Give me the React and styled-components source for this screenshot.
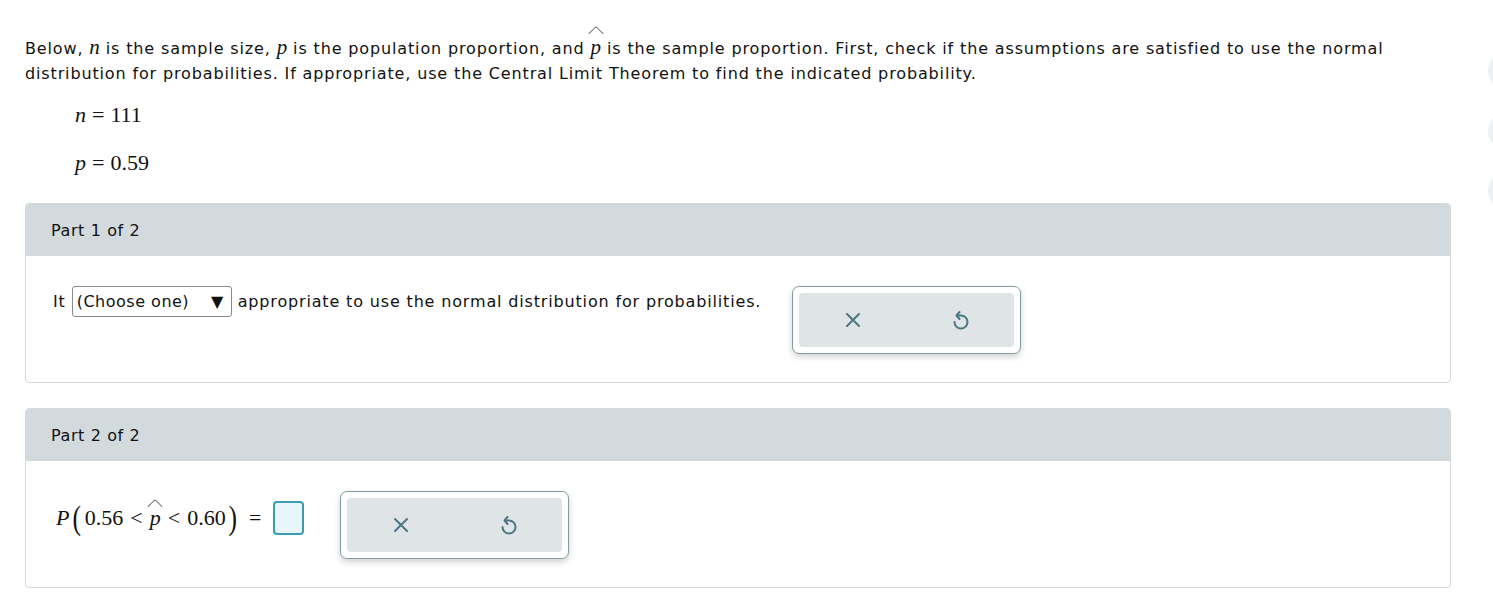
import React from "react";
import styled, { createGlobalStyle } from "styled-components";

const GlobalStyle = createGlobalStyle`
  body {
    margin: 0;
    background: #ffffff;
    font-family: "DejaVu Sans", Verdana, sans-serif;
    color: #111;
  }
`;

const Page = styled.div`
  position: relative;
  width: 1493px;
  height: 602px;
  overflow: hidden;
  padding: 36px 0 0 25px;
  box-sizing: border-box;
`;

const Intro = styled.p`
  margin: 0;
  width: 1400px;
  font-size: 16px;
  line-height: 25px;
  letter-spacing: 0.86px;
`;

const MathVar = styled.span`
  font-family: "Liberation Serif", "Times New Roman", serif;
  font-style: italic;
  font-size: ${(p) => p.size || 22}px;
  line-height: 1;
  letter-spacing: 0;
`;

const Hat = styled.span`
  position: relative;
  display: inline-block;
  line-height: 1;
  &::before {
    content: "";
    position: absolute;
    left: 50%;
    top: ${(p) => p.top}px;
    width: 10px;
    height: 10px;
    border-left: 1.4px solid #444;
    border-top: 1.4px solid #444;
    transform: translateX(-50%) rotate(45deg);
    border-radius: 2px 0 0 0;
  }
`;

const Givens = styled.div`
  display: flex;
  flex-direction: column;
  gap: 25px;
  padding: 17px 0 0 50px;
`;

const MathLine = styled.div`
  font-family: "Liberation Serif", "Times New Roman", serif;
  font-size: 22px;
  line-height: 23px;
`;

const Op = styled.span`
  margin: 0 ${(p) => p.gap || 6}px;
`;

const Card = styled.section`
  width: 1424px;
  border: 1px solid #d3dadd;
  border-radius: 4px;
  overflow: hidden;
  margin-top: ${(p) => p.mt}px;
`;

const CardHeader = styled.div`
  height: 52px;
  background: #d3dadd;
  display: flex;
  align-items: center;
  padding-left: 25px;
  font-size: 16px;
  letter-spacing: 0.6px;
`;

const CardBody = styled.div`
  height: 126px;
  padding: 30px 0 0 27px;
  box-sizing: border-box;
  display: flex;
  align-items: flex-start;
`;

const Sentence = styled.div`
  display: flex;
  align-items: center;
  height: 30px;
  font-size: 16px;
  letter-spacing: 0.84px;
  gap: 5px;
`;

const Select = styled.div`
  display: flex;
  align-items: center;
  justify-content: space-between;
  width: 160px;
  height: 31px;
  box-sizing: border-box;
  border: 1px solid #8a8a8a;
  border-radius: 3px;
  padding: 0 7px 0 4px;
  font-size: 16px;
  letter-spacing: 0.5px;
  margin: 0 1px;
`;

const ActionGroup = styled.div`
  margin-left: ${(p) => p.ml}px;
  width: 229px;
  height: 68px;
  box-sizing: border-box;
  border: 1px solid #7f9ea4;
  border-radius: 7px;
  padding: 6px;
  background: #fff;
  box-shadow: 0 3px 6px rgba(0, 0, 0, 0.18);
  display: flex;
`;

const ActionInner = styled.div`
  flex: 1;
  display: flex;
  background: #dfe5e7;
  border-radius: 4px;
`;

const ActionButton = styled.button`
  flex: 1;
  border: none;
  background: transparent;
  display: flex;
  align-items: center;
  justify-content: center;
  padding: 0;
  color: #4b7682;
`;

const ProbLine = styled.div`
  display: flex;
  align-items: center;
  margin: 10px 0 0 3px;
  font-family: "Liberation Serif", "Times New Roman", serif;
  font-size: 22px;
`;

const Paren = styled.span`
  font-size: 34px;
  font-weight: 200;
  line-height: 1;
  transform: scaleX(0.75);
  margin: 0 ${(p) => p.gap || 0}px;
`;

const AnswerBox = styled.div`
  width: 31px;
  height: 34px;
  box-sizing: border-box;
  border: 2px solid #3a9cb0;
  border-radius: 4px;
  background: #e8f5fa;
  margin-left: 2px;
`;

const SideNav = styled.div`
  position: absolute;
  left: 1488px;
  top: 52px;
  display: flex;
  flex-direction: column;
  gap: 22px;
`;

const SideDot = styled.div`
  width: 38px;
  height: 38px;
  border-radius: 50%;
  background: #eef1f2;
`;

const CloseIcon = () => (
  <svg width="18" height="18" viewBox="0 0 18 18" fill="none" stroke="currentColor" strokeWidth="2" strokeLinecap="round">
    <path d="M3 3 L15 15 M15 3 L3 15" />
  </svg>
);

const UndoIcon = () => (
  <svg width="20" height="22" viewBox="0 0 20 22" fill="none" stroke="currentColor" strokeWidth="2" strokeLinecap="round" strokeLinejoin="round">
    <path d="M6 6.5 H10 A6.5 6.5 0 1 1 3.5 13" />
    <path d="M8.5 3 L5.5 6.5 L8.5 10" />
  </svg>
);

const Actions = ({ ml }) => (
  <ActionGroup ml={ml}>
    <ActionInner>
      <ActionButton aria-label="Clear">
        <CloseIcon />
      </ActionButton>
      <ActionButton aria-label="Undo">
        <UndoIcon />
      </ActionButton>
    </ActionInner>
  </ActionGroup>
);

export default function App() {
  return (
    <>
      <GlobalStyle />
      <Page>
        <Intro>
          Below, <MathVar size={21}>n</MathVar> is the sample size, <MathVar size={21}>p</MathVar> is
          the population proportion, and{" "}
          <Hat top={-9}>
            <MathVar size={21}>p</MathVar>
          </Hat>{" "}
          is the sample proportion. First, check if the assumptions are satisfied to use the normal
          distribution for probabilities. If appropriate, use the Central Limit Theorem to find the
          indicated probability.
        </Intro>

        <Givens>
          <MathLine>
            <MathVar>n</MathVar>
            <Op>=</Op>111
          </MathLine>
          <MathLine>
            <MathVar>p</MathVar>
            <Op>=</Op>0.59
          </MathLine>
        </Givens>

        <Card mt={29}>
          <CardHeader>Part 1 of 2</CardHeader>
          <CardBody>
            <Sentence>
              It
              <Select>
                <span>(Choose one)</span>
                <span>▼</span>
              </Select>
              appropriate to use the normal distribution for probabilities.
            </Sentence>
            <Actions ml={31} />
          </CardBody>
        </Card>

        <Card mt={25}>
          <CardHeader>Part 2 of 2</CardHeader>
          <CardBody>
            <ProbLine>
              <MathVar>P</MathVar>
              <Paren gap={2}>(</Paren>
              0.56
              <Op gap={7}>&lt;</Op>
              <Hat top={-6}>
                <MathVar>p</MathVar>
              </Hat>
              <Op gap={7}>&lt;</Op>
              0.60
              <Paren gap={1}>)</Paren>
              <Op gap={10}>=</Op>
              <AnswerBox />
            </ProbLine>
            <Actions ml={36} />
          </CardBody>
        </Card>

        <SideNav>
          <SideDot />
          <SideDot />
          <SideDot />
        </SideNav>
      </Page>
    </>
  );
}
